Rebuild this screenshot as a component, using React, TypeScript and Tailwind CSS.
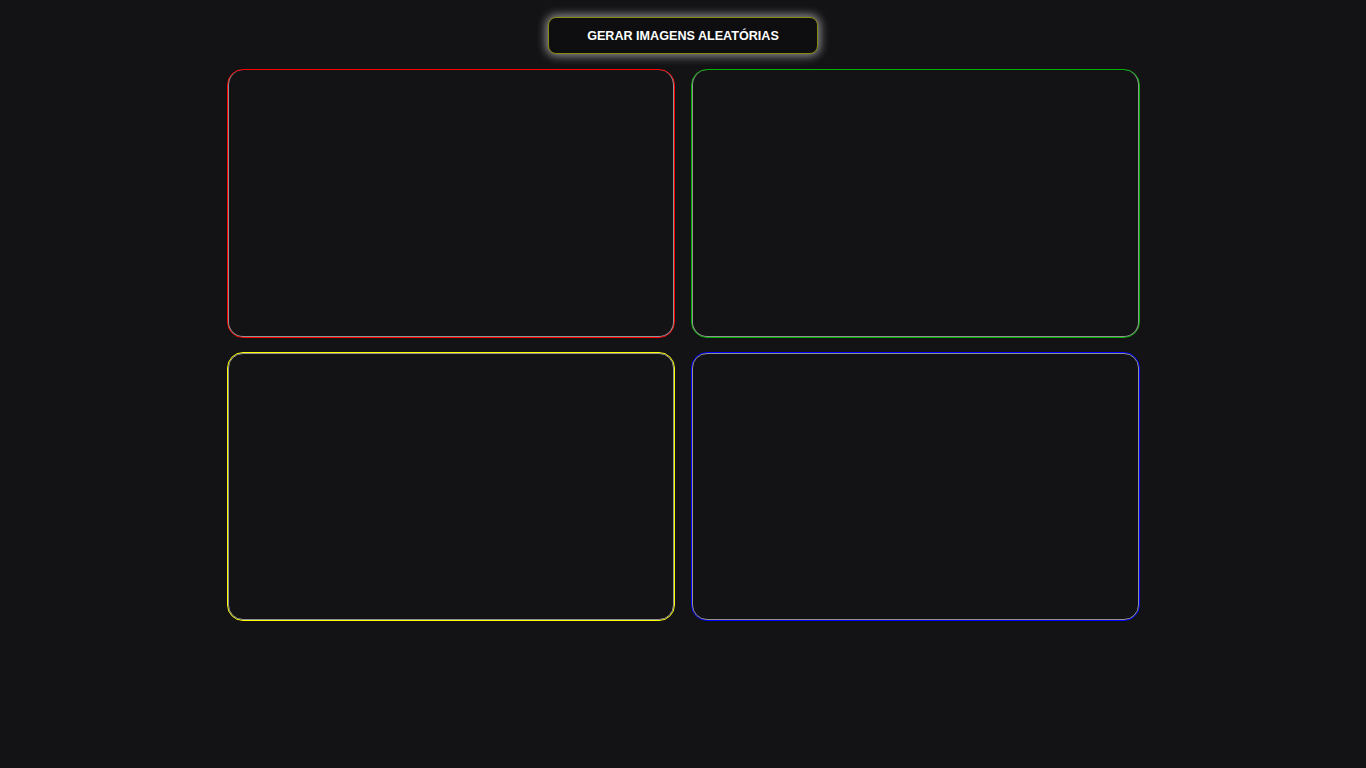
const cards = [
  { outer: "border-[#ff0000]", inner: "border-x border-b" },
  { outer: "border-[#00b000]", inner: "border-x border-b" },
  { outer: "border-[#ffff00]", inner: "border" },
  { outer: "border-[#0000ff]", inner: "border" },
];

export default function App() {
  return (
    <div
      className="min-h-screen w-full bg-[#131315] flex flex-col items-center pt-[17px]"
      style={{ fontFamily: '"Liberation Sans", Arial, sans-serif' }}
    >
      <button className="w-[270px] h-[37px] rounded-[8px] border border-[#8a8a10] bg-[#0e0e10] text-white text-[12.6px] font-bold uppercase pt-[1px] shadow-[0_0_10px_2px_rgba(255,255,255,0.55)]">
        Gerar imagens aleatórias
      </button>
      <div className="mt-[15px] w-[913px] grid grid-cols-2 gap-x-[16px] gap-y-[14px]">
        {cards.map((c, i) => (
          <div
            key={i}
            className={`h-[269px] rounded-[16px] border ${c.outer} bg-[#131315]`}
          >
            <div className={`h-full w-full rounded-[15px] ${c.inner} border-[#c8c8c8]/70`} />
          </div>
        ))}
      </div>
    </div>
  );
}
